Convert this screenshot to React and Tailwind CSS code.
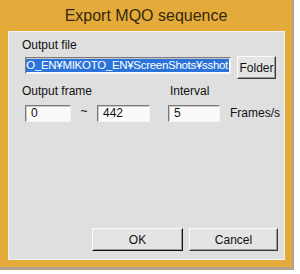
import React from 'react';

const sunken = 'border border-t-[#7a7a7a] border-l-[#7a7a7a] border-r-[#f4f4f4] border-b-[#f4f4f4] bg-[#fafafa] shadow-[inset_1px_1px_0_#c8c8c8]';
const raised = 'border border-t-[#fbfbfb] border-l-[#fbfbfb] border-r-[#3a3a3a] border-b-[#3a3a3a] bg-[#e4e4e4] shadow-[inset_-1px_-1px_0_#9a9a9a]';

const Field = ({ value, className }) => (
  <div className={`h-[17px] ${sunken} ${className} flex items-center pl-[5px] text-[12px] leading-none text-[#111]`}>
    {value}
  </div>
);

const Button = ({ label, className }) => (
  <button className={`h-[23px] ${raised} ${className} text-[12px] text-[#111] flex items-center justify-center`}>
    {label}
  </button>
);

const App = () => {
  return (
    <div className="w-[300px] h-[274px] bg-white" style={{ fontFamily: '"Liberation Sans", Arial, sans-serif' }}>
      <div className="w-[294px] h-[270px] bg-[#b0a48e] flex">
        <div className="w-[292px] h-[267px] bg-[#e4ab3b] flex flex-col">
          <div className="h-[31px] flex items-center justify-center text-[16px] text-[#35280e] pt-[1px]">
            Export MQO sequence
          </div>
          <div className="ml-[8px] w-[277px] h-[229px] bg-[#dfdfdf] border border-[#f2f2f2] relative">
            <div className="pl-[13px] pt-[6px] text-[12px] leading-[14px] text-[#111]">Output file</div>
            <div className="flex items-start mt-[4px]">
              <div className={`ml-[16px] mt-[1px] w-[206px] h-[17px] ${sunken} overflow-hidden flex items-center justify-end pr-[1px]`}>
                <span className="bg-[#2b73d9] text-white text-[11.5px] tracking-[-0.3px] leading-[13px] h-[13px] whitespace-nowrap px-[1px]">
                  MQO_EN¥MIKOTO_EN¥ScreenShots¥sshot
                </span>
              </div>
              <Button label="Folder" className="ml-[6px] w-[39px]" />
            </div>
            <div className="flex mt-[5px] text-[12px] leading-[14px] text-[#111]">
              <div className="pl-[13px] w-[161px]">Output frame</div>
              <div>Interval</div>
            </div>
            <div className="flex items-center mt-[6px]">
              <Field value="0" className="ml-[16px] w-[46px]" />
              <div className="w-[26px] text-center text-[12px] text-[#111] -mt-[4px]">~</div>
              <Field value="442" className="w-[53px]" />
              <Field value="5" className="ml-[18px] w-[52px]" />
              <div className="ml-[10px] text-[12px] text-[#111]">Frames/s</div>
            </div>
            <div className="flex mt-[106px]">
              <Button label="OK" className="ml-[83px] w-[91px] border-r-[#111] border-b-[#111]" />
              <Button label="Cancel" className="ml-[6px] w-[89px]" />
            </div>
          </div>
        </div>
      </div>
    </div>
  );
};

export default App;
